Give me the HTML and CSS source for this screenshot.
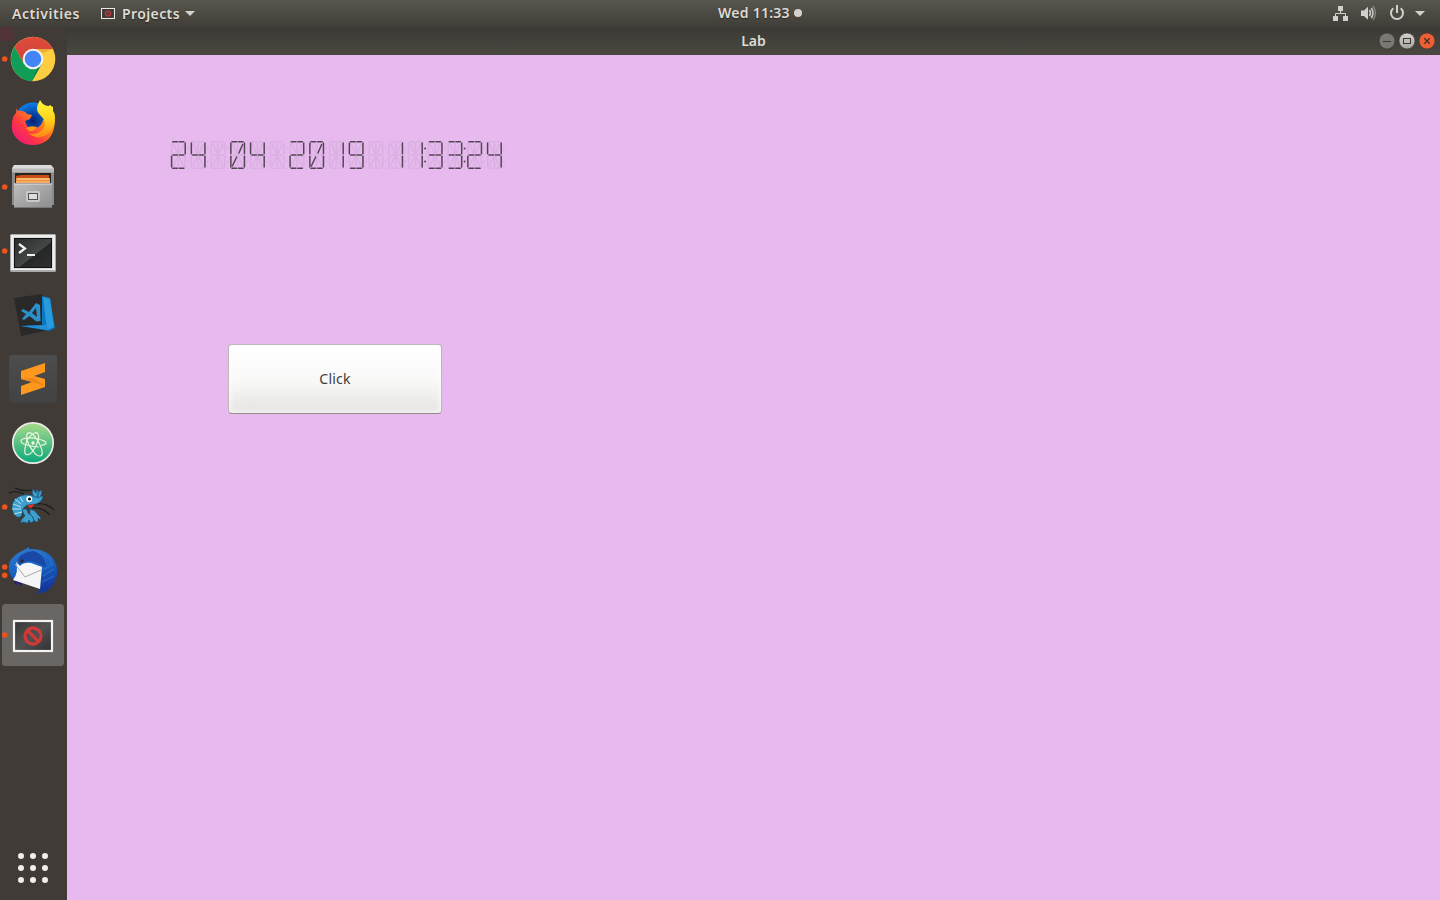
FILE: index.html
```html
<!DOCTYPE html>
<html lang="en">
<head>
<meta charset="utf-8">
<title>Lab</title>
<link rel="stylesheet" href="styles.css">
</head>
<body>
<div class="desktop">
<header class="topbar">
  <div class="top-left">
    <span class="activities">Activities</span>
    <svg class="app-icon" width="14" height="11" viewBox="0 0 14 11"><rect x=".5" y=".5" width="13" height="10" fill="#403c39" stroke="#e8e6e2"/><circle cx="7" cy="5.5" r="2.5" fill="none" stroke="#c7373b" stroke-width="1.2"/><path d="M5.3 3.8l3.4 3.4" stroke="#c7373b"/></svg>
    <span class="projects">Projects</span>
    <svg class="caret" width="10" height="5" viewBox="0 0 10 5"><path d="M0 0h10L5 5z" fill="#d5d3cf"/></svg>
  </div>
  <div class="top-clock"><span class="time">Wed 11:33</span><span class="notice"></span></div>
  <svg class="tray" width="108" height="27" viewBox="1332 0 108 27">
    <g fill="#d2d0cc"><rect x="1338" y="6" width="5" height="5"/><rect x="1333" y="16" width="5" height="5"/><rect x="1343" y="16" width="5" height="5"/><path d="M1361 10.500h3l4-3.800v13l-4-3.700h-3z"/><path d="M1415 11h10l-5 5z"/></g>
    <g fill="none" stroke="#d2d0cc"><path d="M1340.500 11v3M1335.500 16v-2.500h10V16"/><path stroke-width="1.500" d="M1369.500 10q2 3 0 6"/><path stroke-width="1.500" d="M1371.300 8q3.400 5 0 10"/><path stroke-width="1.500" opacity=".4" d="M1373 6q5 7 0 14"/><path stroke-width="2" d="M1393.300 8.300a6 6 0 1 0 7.400 0M1397 5v8"/></g>
  </svg>
</header>
<div class="work">
<nav class="dock">
  <div class="item">
    <svg viewBox="0 27 67 64"><defs><linearGradient id="cr" x2="0" y2="1"><stop stop-color="#de4b3d"/><stop offset="1" stop-color="#d04336"/></linearGradient></defs>
      <rect y="27" width="14" height="14" fill="#503237"/><circle cx="4.700" cy="59" r="2.800" fill="#e95420"/>
      <circle cx="33" cy="59" r="22.300" fill="#ffcd42"/>
      <path d="M14.500 47A22.300 22.300 0 0 1 53 49H33l-9.500 14z" fill="url(#cr)"/>
      <path d="M14.500 47A22.300 22.300 0 0 0 32 81.300L41.700 64 33 60l-9 4z" fill="#109d58"/>
      <path d="M33 49h20l-10 4z" fill="#ecae39"/><path d="M32 81.300L41.700 64l-5 5z" fill="#0c8049"/>
      <circle cx="33" cy="59" r="10.300" fill="#f4f4f4"/><circle cx="33" cy="59" r="8.300" fill="#4285f4"/></svg>
  </div>
  <div class="item">
    <svg viewBox="0 91 67 64"><defs><linearGradient id="fx" x1="0" y1="1" x2="1" y2="0"><stop stop-color="#e3108c"/><stop offset=".35" stop-color="#ff3545"/><stop offset=".65" stop-color="#ff8a17"/><stop offset="1" stop-color="#ffe535"/></linearGradient><linearGradient id="fy" x2="0" y2="1"><stop stop-color="#fff63c"/><stop offset=".5" stop-color="#ffd51b"/><stop offset="1" stop-color="#ff8516"/></linearGradient><radialGradient id="fb"><stop stop-color="#061f70"/><stop offset="1" stop-color="#0b7ee9"/></radialGradient></defs>
      <circle cx="33" cy="121" r="18.500" fill="url(#fb)"/>
      <path d="M17 105q-1 4 1 6 3-1 7 1l2 2 5 1-2 4-5 2 2 5q4 5 9 2 6-2 7-8l8-7 4 8q-1 23-22 24-16 0-21-15-1-13 4-17z" fill="url(#fx)"/>
      <path d="M26 128q5-3 11-1-3 5-8 4z" fill="#ff9718"/>
      <path d="M40 100q-6 10 0 15 8 7 3 14-6 7-15 4 11 9 22-1 5-7 5-14 0-5-2-7v-4l-2-1q-1-2-2 0-6 0-9-6z" fill="url(#fy)"/></svg>
  </div>
  <div class="item">
    <svg viewBox="0 155 67 64"><defs><linearGradient id="fc" x2="1" y2="1"><stop stop-color="#bdbdbd"/><stop offset="1" stop-color="#8d8d8d"/></linearGradient></defs>
      <circle cx="4.700" cy="187" r="2.800" fill="#e95420"/><path d="M12 168l2-3h37l3 3v37H12z" fill="#8b8b8b"/><path d="M12 169l2-4h37l3 4z" fill="#ddd"/><rect x="12" y="168.500" width="42" height="4" fill="#bababa"/>
      <path d="M15 173h36v11H15z" fill="#282421"/><path d="M16 176l6-1h27v8H16z" fill="#c94d1b"/><path d="M16 178h34v5H16z" fill="#f19036"/><path d="M17 179h32" stroke="#ffe6aa"/><path d="M16 182h34" stroke="#f6c48d"/>
      <path d="M14 183.500h38V208H14z" fill="url(#fc)"/><path d="M14 184h38" stroke="#e2e2e2"/><path d="M14 207.500h38" stroke="#777"/><rect x="26" y="191" width="14" height="11" rx="2" fill="#c9c9c9"/><rect x="28.500" y="193.500" width="9" height="6" fill="#ddd" stroke="#505050"/></svg>
  </div>
  <div class="item">
    <svg viewBox="0 219 67 64"><defs><linearGradient id="te" x2="1" y2="1"><stop stop-color="#2b2c2c"/><stop offset=".55" stop-color="#454646"/><stop offset=".57" stop-color="#252626"/><stop offset="1" stop-color="#313131"/></linearGradient></defs>
      <circle cx="4.700" cy="251" r="2.800" fill="#e95420"/><rect x="10" y="234" width="46" height="38" rx="1.500" fill="#aaa"/><path d="M11 235h44v35H11z" fill="#eee"/><rect x="13" y="237" width="40" height="32" fill="#dadada"/><rect x="14" y="238" width="38" height="30" fill="#111"/><rect x="15" y="239" width="36" height="28" fill="url(#te)"/><path d="M19 244l6 4.500-6 4.500" fill="none" stroke="#f2f2f2" stroke-width="2.200"/><path d="M27 255h8" stroke="#eee" stroke-width="2"/></svg>
  </div>
  <div class="item">
    <svg viewBox="0 283 67 64"><path d="M14 298l28-4 11 35-32 7z" fill="#29292a"/><path d="M42 296l8 2 5 30-6 3-28-5 21-1z" fill="#0878c3"/><path d="M43 297l7 2 4 28-7 3z" fill="#289ade"/><path d="M21 326l26-1 1 5z" fill="#238ed2"/><path fill-rule="evenodd" d="M36 303l4 2 .5 16-4 .500L29.500 316 24 320l-2-1 4-5-5-3 2-2 6 3zM36 308l-4 5 5 4z" fill="#2d8fca"/></svg>
  </div>
  <div class="item">
    <svg viewBox="0 347 67 64"><defs><linearGradient id="su" x2="0" y2="1"><stop stop-color="#4d4d4d"/><stop offset="1" stop-color="#424242"/></linearGradient></defs><rect x="9" y="355" width="48" height="48" rx="2.500" fill="url(#su)"/><path d="M21 371l24-8v9l-11 4 11 3v8l-24 8v-9l11-4-11-3z" fill="#ff981d"/><path d="M21 379l11 3 13 4-8-6-5-2z" fill="#ed8719"/></svg>
  </div>
  <div class="item">
    <svg viewBox="0 411 67 64"><defs><linearGradient id="at" x2="0" y2="1"><stop stop-color="#a9db8b"/><stop offset="1" stop-color="#09a77b"/></linearGradient></defs><circle cx="33" cy="443" r="20.200" fill="url(#at)" stroke="#ece9e7" stroke-width="1.700"/><g fill="none" stroke="#e8f5dd" stroke-width="1.200"><path d="M39 447c-10-1-18-3-18-6 0-3 10-4 17-2 5 1 8 3 8 4 0 2-3 2-5 2"/><path d="M33 451c-6-7-8-15-5-18 3-2 9 5 12 12 3 6 3 11 0 11-2 0-5-2-7-5"/><path d="M27 440c5-7 10-9 11-6 2 3-1 11-5 17-3 4-7 5-8 2-1-2 0-6 2-13"/></g><circle cx="33" cy="443" r="1.700" fill="#edf8e4"/></svg>
  </div>
  <div class="item">
    <svg viewBox="0 475 67 64"><circle cx="4.700" cy="507" r="2.800" fill="#e95420"/>
      <path d="M9 493q7-3 15 1M15 488q8 4 17 2M32 505q13-4 22 5M32 508q11-1 18 7" fill="none" stroke="#171b1c" stroke-width="1.100"/>
      <g fill="#3d9fce" stroke="#174e6e" stroke-width=".6"><path d="M24 495q-11 2-12 11 0 8 5 11 4 1 5-3 0-6 5-9l9-1q7-3 7-8l-8 1q-5-3-11-2z"/><path d="M34 497q-3-4-1-8l3 4 1-4q3 3 1 8zM37 497l1-5 4-2q0 5-3 8z"/><path d="M22 510q5-3 6 3l4 3q4 5-1 7l-2-3-1 3-5-1-3 1 2-4 3-3zM30 509l5 2 3 4q4 2 2 5l-2-2v4q-5 0-5-5l-3-3z"/></g>
      <path d="M15 499l6 5M13 504l8 3M12 509l9 0M14 514l8-2M20 497l3 5" stroke="#b7e2f2" stroke-width="1"/><circle cx="29.200" cy="499" r="3" fill="#fff"/><circle cx="29.500" cy="499" r="1.500"/><path d="M27 505q4 1 7-2 0 4-4 5z" fill="#e53222"/></svg>
  </div>
  <div class="item">
    <svg viewBox="0 539 67 64"><defs><linearGradient id="tb" x2=".3" y2="1"><stop stop-color="#347dcc"/><stop offset=".55" stop-color="#1762c4"/><stop offset="1" stop-color="#15369a"/></linearGradient></defs><g fill="#e95420"><circle cx="4.700" cy="567" r="2.800"/><circle cx="4.700" cy="575.200" r="2.800"/></g>
      <path d="M22 551l7-4v2q14-1 22 7 7 8 6 18-1 10-11 18l-4 1 1-2-7 4 4-7-15-8-6 2 2 4q-10-6-12-16-2-12 13-19z" fill="url(#tb)"/><path d="M17 563q2 15-3 20l3 2-1-3 6 4v-8z" fill="#241b65"/><path d="M18 559q4-7 15-8 12 3 13 16-10-5-17-6-7 1-10 4z" fill="#1b48a6"/><path d="M16 562l4 4q4-4 11-3l11 4-2 22q-12-4-27-9 6-8 3-18z" fill="#f5f5f6"/><path d="M15 564l10 13 16-7" fill="none" stroke="#aaa" stroke-width="1"/><circle cx="22" cy="561" r="1.800" fill="#34262c"/><path d="M36 551q13 5 16 13M43 570l10-6M43 576l11-7M42 582l12-6" stroke="#3479cb" stroke-width=".8" fill="none"/></svg>
  </div>
  <div class="item">
    <svg viewBox="0 603 67 64"><defs><linearGradient id="no" x2="1" y2="1"><stop stop-color="#363636"/><stop offset=".5" stop-color="#515151"/><stop offset="1" stop-color="#303030"/></linearGradient></defs><rect x="2" y="604" width="62" height="62" rx="3.500" fill="#6a6663"/><circle cx="4.700" cy="635" r="2.800" fill="#e95420"/><rect x="14" y="621" width="38" height="30" fill="url(#no)" stroke="#f4f4f2" stroke-width="2.200"/><circle cx="33" cy="636" r="8" fill="none" stroke="#cf3938" stroke-width="3.300"/><path d="M27.500 630.500l11 11" stroke="#cf3938" stroke-width="3.300"/></svg>
  </div>
  <div class="launcher"><i></i><i></i><i></i><i></i><i></i><i></i><i></i><i></i><i></i></div>
</nav>
<main class="window">
  <div class="titlebar"><span class="title">Lab</span>
    <svg class="controls" width="62" height="28" viewBox="1378 27 62 28"><defs><linearGradient id="wc" x2="0" y2="1"><stop stop-color="#d2d1cd"/><stop offset="1" stop-color="#a6a49f"/></linearGradient></defs>
      <circle cx="1387" cy="41" r="8" fill="#797873" stroke="#302f2b" stroke-width=".6"/><circle cx="1407" cy="41" r="8" fill="url(#wc)" stroke="#302f2b" stroke-width=".6"/><circle cx="1427" cy="41" r="8" fill="#ed6035" stroke="#302f2b" stroke-width=".6"/><path d="M1383 41.500h8" stroke="#3b3a35"/><rect x="1403.500" y="38.500" width="7" height="5" fill="none" stroke="#3b3a35"/><path d="M1424.300 38.300l5.400 5.400m0-5.400l-5.400 5.400" stroke="#423026" stroke-width="1.300"/></svg>
  </div>
  <section class="content">
    <svg class="lcd" width="340" height="32" viewBox="0 0 340 32" role="img" aria-label="24 04 2019 11:33:24"></svg>
    <button class="click">Click</button>
  </section>
</main>
</div>
</div>
<script src="lcd.js"></script>
</body>
</html>
```
FILE: styles.css
```css
* { box-sizing: border-box; }
body { margin: 0; font-family: "Noto Sans", "Open Sans", sans-serif; }
.desktop { width: 1440px; height: 900px; display: flex; flex-direction: column; overflow: hidden; background: #403b37; }
.topbar { height: 27px; display: grid; grid-template-columns: 680px 160px 600px; align-items: center; background: linear-gradient(#59564e, #403e38); color: #dfdbd2; font-size: 14px; font-weight: 600; text-shadow: 0 1px 1px #292824; white-space: nowrap; }
.top-left { display: flex; align-items: center; padding-left: 12px; }
.activities { width: 89px; letter-spacing: .55px; }
.app-icon { margin-right: 7px; }
.projects { width: 59px; letter-spacing: .4px; }
.caret { margin-left: 4px; }
.top-clock { display: flex; align-items: center; justify-content: center; line-height: 20px; }
.time { width: 72px; margin-top: -1px; letter-spacing: .25px; }
.notice { width: 8px; height: 8px; margin: -1px 0 0 4px; border-radius: 50%; background: #d4d2ce; }
.tray { justify-self: end; }
.work { height: 873px; display: flex; }
.dock { width: 67px; display: flex; flex-direction: column; background: #403b37; }
.item { height: 64px; flex: none; }
.item svg { display: block; width: 67px; height: 64px; }
.launcher { display: grid; grid-template-columns: repeat(3, 6px); gap: 6px; margin: auto auto 17px 18px; }
.launcher i { width: 6px; height: 6px; border-radius: 50%; background: #f1efeb; }
.window { flex: 1; display: flex; flex-direction: column; }
.titlebar { height: 28px; display: grid; grid-template-columns: 62px 1fr 62px; align-items: center; background: linear-gradient(#3b3a35, #494740); color: #dfdbd2; font-size: 14px; font-weight: 600; }
.title { grid-column: 2; padding-bottom: 2px; text-align: center; }
.content { flex: 1; display: flex; flex-direction: column; align-items: flex-start; background: #e7b9ef; }
.lcd { margin: 84px 0 0 102px; }
.click { width: 214px; height: 70px; margin: 173px 0 0 161px; padding: 0 0 1px; border: 1px solid #bcb8b5; border-bottom-color: #928e8a; border-radius: 4px; background: linear-gradient(#fff, #f8f8f7 55%, #e4e3e1); box-shadow: inset 0 0 5px 2px rgba(255,255,255,.65); color: #3c3c3c; font: 14px "Noto Sans", sans-serif; letter-spacing: .2px; }
```
FILE: lcd.js
```js
const segments = {
  a: [3.800, 2.700, 8.600, 2.700], b: [10.400, 2.700, 15, 2.700], f: [2.700, 4, 2.700, 14.800], c: [16.300, 4, 16.300, 14.800],
  g: [4, 15.900, 8.600, 15.900], h: [10.400, 15.900, 15, 15.900], e: [2.700, 17.300, 2.700, 28], d: [16.300, 17.300, 16.300, 28],
  i: [3.800, 29.300, 8.600, 29.300], j: [10.400, 29.300, 15, 29.300],
  k: [4.500, 5, 8.500, 14], l: [9.500, 4.500, 9.500, 14.800], m: [14.500, 5.500, 10.800, 14],
  n: [8.500, 18, 4.200, 27], o: [9.500, 17.300, 9.500, 27.500], p: [10.500, 18, 14.500, 27]
};
const glyphs = { '0': 'abfcedijmn', '1': 'cd', '2': 'abcgheij', '3': 'abcghdij', '4': 'fcghd', '9': 'abfcghdij', ' ': '' };
const cells = ['2', '4', ' ', '0', '4', ' ', '2', '0', '1', '9', ' ', '1', '1:', '3', '3:', '2', '4'];
const lcd = document.querySelector('.lcd');
let output = '';
cells.forEach((cell, index) => {
  let off = '', on = '';
  for (const [key, p] of Object.entries(segments)) {
    const line = `<line x1="${p[0]}" y1="${p[1]}" x2="${p[2]}" y2="${p[3]}"/>`;
    if (glyphs[cell[0]].includes(key)) on += line; else off += line;
  }
  const dots = cell[1] ? '#514752' : '#d9b0e1';
  output += `<g transform="translate(${index * 19.75 - .1} 0)" stroke-width="1.5" stroke-linecap="round"><g stroke="#d9b0e1">${off}</g><g stroke="#514752">${on}</g><circle cx="19.200" cy="9.500" r="1" fill="${dots}"/><circle cx="19.200" cy="22.500" r="1" fill="${dots}"/><circle cx="19.200" cy="29.200" r=".8" fill="#d9b0e1"/></g>`;
});
lcd.innerHTML = output;
```
